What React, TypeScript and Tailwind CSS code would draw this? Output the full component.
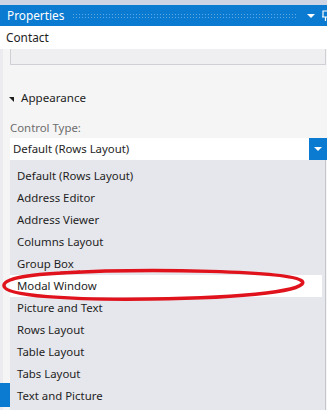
import { useState } from 'react'

const options = [
  'Default (Rows Layout)',
  'Address Editor',
  'Address Viewer',
  'Columns Layout',
  'Group Box',
  'Modal Window',
  'Picture and Text',
  'Rows Layout',
  'Table Layout',
  'Tabs Layout',
  'Text and Picture',
]

export default function App() {
  const [selected, setSelected] = useState('Default (Rows Layout)')
  const hovered = 'Modal Window'

  return (
    <div className="relative w-[327px] h-[410px] overflow-hidden bg-[#f5f5f5] text-[#1e1e1e] text-[11.4px] font-['Noto_Sans',sans-serif]">
      {/* window strip */}
      <div className="h-[5px] bg-[#cdd5e4]" />

      {/* title bar */}
      <div className="flex h-[21px] items-center bg-[#0a7bd0] pl-[7px] text-white">
        <span className="text-[11.8px] leading-none">Properties</span>
        <div className="ml-[8px] h-[5px] flex-1 bg-[radial-gradient(circle,#5ea8e4_0.8px,transparent_1px)] bg-[length:3px_3px]" />
        <span className="ml-[9px] mt-[1px] h-0 w-0 border-x-[4px] border-t-[4px] border-x-transparent border-t-white" />
        <svg width="10" height="12" viewBox="0 0 10 12" className="ml-[6px] -mr-[4px]">
          <path d="M2 1h5v6H2z M1 7h7 M4.5 7v4" fill="none" stroke="white" strokeWidth="1.2" />
        </svg>
      </div>

      {/* object name */}
      <div className="flex h-[23px] items-center bg-white pl-[6px] text-[11.8px]">Contact</div>

      <div className="flex">
        <div className="w-[10px] shrink-0 border-l-[3px] border-[#ebebf0]" />
        <div className="flex-1">
          <div className="h-[16px] mr-[1px] border border-t-0 border-[#cfd0d6] bg-[#efeff2]" />

          {/* category */}
          <div className="mt-[25px] flex h-[16px] items-center text-[11.6px]">
            <span className="ml-[-1px] h-0 w-0 border-l-[5px] border-t-[5px] border-l-transparent border-t-[#1e1e1e] mt-[3px]" />
            <span className="ml-[7px]">Appearance</span>
          </div>

          <div className="mt-[14px] h-[16px] leading-[16px] text-[#6d6d6d]">Control Type:</div>

          {/* combo box */}
          <div className="mt-[2px] flex h-[22px] bg-white">
            <div className="flex flex-1 items-center pl-[3px]">{selected}</div>
            <div className="flex w-[18px] items-center justify-center bg-[#0a7bd0]">
              <span className="h-0 w-0 border-x-[4px] border-t-[4px] border-x-transparent border-t-white" />
            </div>
          </div>

          {/* open list */}
          <ul className="h-[260px] mr-[1px] border-r border-[#c5c6cc] bg-[#e6e7ec] pt-[5px]">
            {options.map((o) => (
              <li
                key={o}
                onClick={() => setSelected(o)}
                className={
                  'flex h-[22px] items-center pl-[7px] ' +
                  (o === hovered ? 'bg-white mr-[3px]' : '')
                }
              >
                {o}
              </li>
            ))}
          </ul>
        </div>
      </div>

      {/* tab edge at the left */}
      <div className="absolute left-0 top-[383px] h-[24px] w-[10px] bg-[#0a7bd0]" />

      {/* red annotation */}
      <svg className="absolute left-0 top-[268px]" width="310" height="36" viewBox="0 0 310 36">
        <path
          d="M60 5 C150 0 290 3 302 13 C310 22 250 30 150 31 C70 32 5 28 4 18 C3 10 30 6 80 4"
          fill="none"
          stroke="#e0121c"
          strokeWidth="3.5"
        />
      </svg>
    </div>
  )
}
